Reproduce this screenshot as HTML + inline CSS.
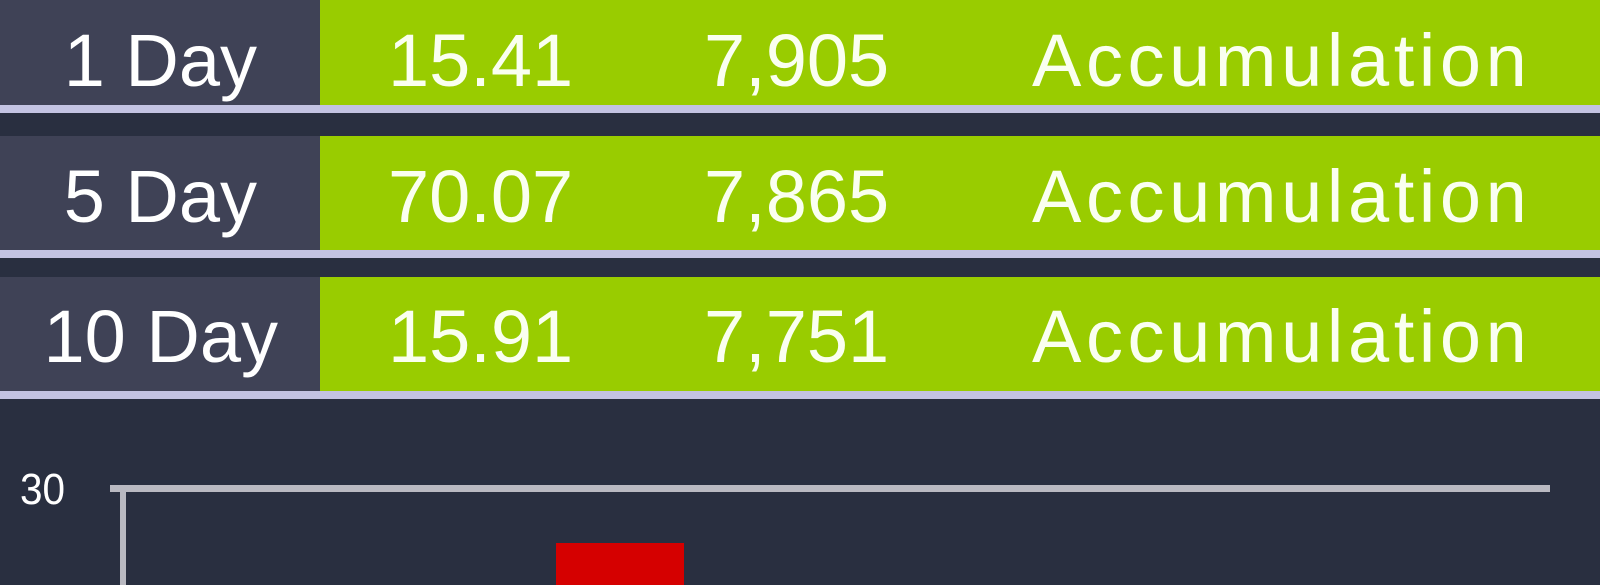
<!DOCTYPE html>
<html><head><style>
html,body{margin:0;padding:0;}
body{width:1600px;height:585px;background:#292f40;position:relative;overflow:hidden;font-family:"Liberation Sans",sans-serif;}
.row{position:absolute;left:0;width:1600px;}
.d{position:absolute;left:0;top:0;width:320px;background:#3f4256;}
.g{position:absolute;left:320px;top:0;width:1280px;background:#99cc00;}
.ln{position:absolute;left:0;width:1600px;height:8px;background:#c3c3e2;}
.t{position:absolute;font-size:74px;color:#fafff0;line-height:1;white-space:nowrap;}
.lab{right:1343px;color:#fff;text-align:right;}
.acc{letter-spacing:4.6px;}
</style></head><body>
<div class="row" style="top:0;height:105px"><div class="d" style="height:105px"></div><div class="g" style="height:105px"></div></div>
<div class="ln" style="top:105px"></div>
<div class="row" style="top:136px;height:114px"><div class="d" style="height:114px"></div><div class="g" style="height:114px"></div></div>
<div class="ln" style="top:250px"></div>
<div class="row" style="top:277px;height:114px"><div class="d" style="height:114px"></div><div class="g" style="height:114px"></div></div>
<div class="ln" style="top:391px"></div>

<div class="t lab" style="top:24px">1 Day</div>
<div class="t" style="left:388px;top:24px">15.41</div>
<div class="t" style="left:704px;top:24px">7,905</div>
<div class="t acc" style="left:1032px;top:24px">Accumulation</div>

<div class="t lab" style="top:160px">5 Day</div>
<div class="t" style="left:388px;top:160px">70.07</div>
<div class="t" style="left:704px;top:160px">7,865</div>
<div class="t acc" style="left:1032px;top:160px">Accumulation</div>

<div class="t lab" style="top:300px;right:1322px">10 Day</div>
<div class="t" style="left:388px;top:300px">15.91</div>
<div class="t" style="left:704px;top:300px">7,751</div>
<div class="t acc" style="left:1032px;top:300px">Accumulation</div>

<div style="position:absolute;left:20px;top:468px;font-size:44px;color:#fff;line-height:1;transform:scaleX(0.92);transform-origin:left">30</div>
<div style="position:absolute;left:110px;top:485px;width:1440px;height:7px;background:#b9b9c1;"></div>
<div style="position:absolute;left:120px;top:485px;width:6px;height:100px;background:#b9b9c1;"></div>
<div style="position:absolute;left:556px;top:543px;width:128px;height:42px;background:#d50000;"></div>
</body></html>
